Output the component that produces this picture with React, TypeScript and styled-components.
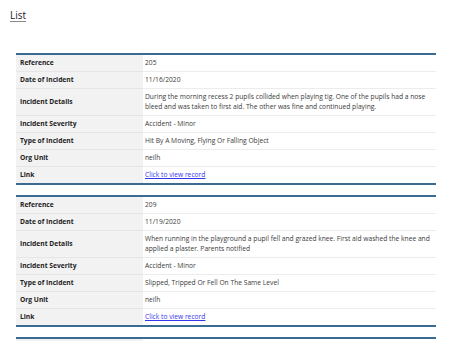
import React from "react";
import styled, { createGlobalStyle } from "styled-components";

const GlobalStyle = createGlobalStyle`
  body {
    margin: 0;
    background: #ffffff;
    font-family: "Open Sans", "Noto Sans", sans-serif;
    color: #333333;
  }
`;

const Page = styled.div`
  padding: 8px 26px 0 16px;
`;

const Title = styled.h1`
  margin: 0 0 0 -6px;
  font-size: 10px;
  font-weight: 400;
  line-height: 14px;
  color: #222222;
  text-decoration: underline;
  text-decoration-color: #8a8a8a;
  text-underline-offset: 2px;
`;

const List = styled.div`
  margin-top: 31px;
  display: flex;
  flex-direction: column;
  gap: 10px;
`;

const RecordTable = styled.table`
  width: 420px;
  border-collapse: separate;
  border-spacing: 0;
  border-top: 2px solid #3a6b92;
  border-bottom: 2px solid #3a6b92;
  font-size: 6.7px;
  line-height: 10px;

  tr:last-child > * {
    border-bottom: none;
  }
`;

const Label = styled.th`
  width: 119px;
  padding: 3px 4px;
  background: #f2f2f2;
  color: #222222;
  font-weight: 700;
  text-align: left;
  vertical-align: middle;
  border-bottom: 1px solid #e6e6e6;
`;

const Value = styled.td`
  padding: 3px 2px;
  color: #3a3a3a;
  vertical-align: middle;
  border-bottom: 1px solid #ececec;
`;

const RecordLink = styled.a`
  color: #3535f0;
  text-decoration: underline;
`;

const ListEnd = styled.div`
  width: 420px;
  border-top: 2px solid #3a6b92;
`;

const ListEndStrip = styled.div`
  width: 127px;
  height: 2px;
  background: #f2f2f2;
`;

type Incident = {
  reference: string;
  date: string;
  details: string;
  severity: string;
  type: string;
  orgUnit: string;
};

const incidents: Incident[] = [
  {
    reference: "205",
    date: "11/16/2020",
    details:
      "During the morning recess 2 pupils collided when playing tig. One of the pupils had a nose bleed and was taken to first aid. The other was fine and continued playing.",
    severity: "Accident - Minor",
    type: "Hit By A Moving, Flying Or Falling Object",
    orgUnit: "neilh",
  },
  {
    reference: "209",
    date: "11/19/2020",
    details:
      "When running in the playground a pupil fell and grazed knee. First aid washed the knee and applied a plaster. Parents notified",
    severity: "Accident - Minor",
    type: "Slipped, Tripped Or Fell On The Same Level",
    orgUnit: "neilh",
  },
];

function IncidentTable({ incident }: { incident: Incident }) {
  return (
    <RecordTable>
      <tbody>
        <tr>
          <Label>Reference</Label>
          <Value>{incident.reference}</Value>
        </tr>
        <tr>
          <Label>Date of Incident</Label>
          <Value>{incident.date}</Value>
        </tr>
        <tr>
          <Label>Incident Details</Label>
          <Value>{incident.details}</Value>
        </tr>
        <tr>
          <Label>Incident Severity</Label>
          <Value>{incident.severity}</Value>
        </tr>
        <tr>
          <Label>Type of Incident</Label>
          <Value>{incident.type}</Value>
        </tr>
        <tr>
          <Label>Org Unit</Label>
          <Value>{incident.orgUnit}</Value>
        </tr>
        <tr>
          <Label>Link</Label>
          <Value>
            <RecordLink href="#">Click to view record</RecordLink>
          </Value>
        </tr>
      </tbody>
    </RecordTable>
  );
}

export default function App() {
  return (
    <>
      <GlobalStyle />
      <Page>
        <Title>List</Title>
        <List>
          {incidents.map((incident) => (
            <IncidentTable key={incident.reference} incident={incident} />
          ))}
          <ListEnd>
            <ListEndStrip />
          </ListEnd>
        </List>
      </Page>
    </>
  );
}
